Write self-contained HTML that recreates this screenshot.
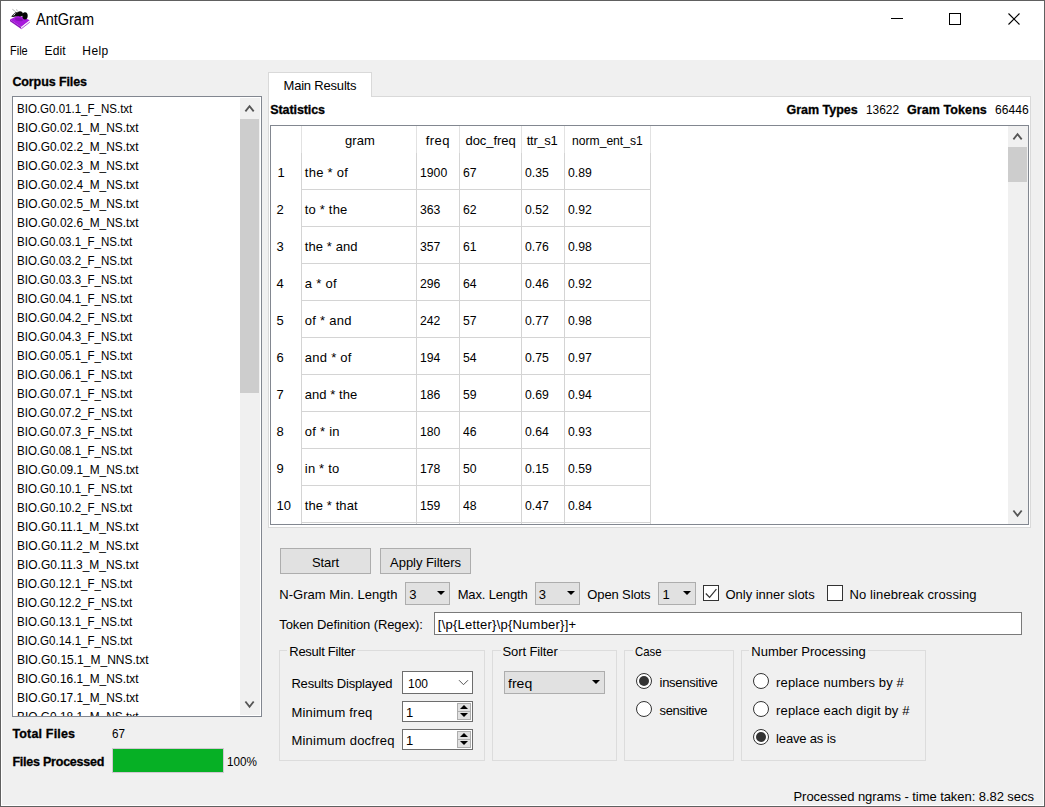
<!DOCTYPE html>
<html>
<head>
<meta charset="utf-8">
<title>AntGram</title>
<style>
html,body{margin:0;padding:0;}
body{width:1045px;height:807px;overflow:hidden;background:#f0f0f0;font-family:"Liberation Sans",sans-serif;color:#000;}
#win{position:relative;width:1045px;height:807px;overflow:hidden;background:#f0f0f0;}
#win div,#win span,#win svg{position:absolute;box-sizing:border-box;}
.t{white-space:pre;line-height:1;}
</style>
</head>
<body>
<div id="win">
<div style="left:0px;top:0px;width:1045px;height:60px;background:#fff;"></div>
<span class="t" style="left:35.50px;top:12px;font-size:16px;transform:scaleX(0.9060);transform-origin:0 0;">AntGram</span>
<svg style="left:0px;top:0px" width="40" height="34" viewBox="0 0 40 34"><polygon points="10,19.6 18.5,15.2 29.8,20.3 21.2,27" fill="#a818dc"/><polygon points="10,19.6 21.2,27 21.2,28.9 10,21.2" fill="#8e12bd"/><polygon points="21.2,27 29.8,20.3 29.8,22.2 21.2,28.9" fill="#f4e8fa"/><path d="M21.2 28.9 L29.8 22.2" stroke="#a030d0" stroke-width="0.8"/><ellipse cx="19" cy="19.5" rx="4" ry="1.6" fill="#8a10b8" transform="rotate(12 19 19.5)"/><ellipse cx="25" cy="15.8" rx="2.7" ry="3.6" fill="#050505"/><ellipse cx="20" cy="13.8" rx="2.8" ry="2.6" fill="#050505"/><path d="M11.2 16.4 L15.5 12.2 L19 12.5 L18.5 16 L13 17 Z" fill="#0a0a0a"/><path d="M13.6 15.6 L15.4 13.4" stroke="#eee" stroke-width="0.9"/><path d="M15.6 11.6 L12.4 9.3 M17.4 11.4 L16.6 9.4" stroke="#777" stroke-width="0.6" fill="none"/><path d="M22 15 L24 14" stroke="#050505" stroke-width="2.5"/></svg>
<div style="left:891px;top:18px;width:12px;height:1px;background:#000;"></div>
<div style="left:949px;top:13px;width:12px;height:12px;border:1px solid #000;"></div>
<svg style="left:1008px;top:12px" width="14" height="14" viewBox="0 0 14 14"><path d="M0.5 1.5 L11.5 12.5 M11.5 1.5 L0.5 12.5" stroke="#000" stroke-width="1.1" fill="none"/></svg>
<span class="t" style="left:9.70px;top:45px;font-size:12px;transform:scaleX(0.9156);transform-origin:0 0;">File</span>
<span class="t" style="left:44.50px;top:45px;font-size:12px;letter-spacing:0.175px;">Edit</span>
<span class="t" style="left:82.30px;top:45px;font-size:12px;letter-spacing:0.439px;">Help</span>
<span class="t" style="left:12.40px;top:76px;font-size:12.5px;font-weight:bold;-webkit-text-stroke:0.3px #000;letter-spacing:-0.101px;">Corpus Files</span>
<div style="left:12px;top:96px;width:250px;height:621px;background:#fff;border:1px solid #828790;"></div>
<div style="left:13px;top:97px;width:227px;height:619px;overflow:hidden;"><span class="t" style="left:4.00px;top:5px;font-size:13px;transform:scaleX(0.8866);transform-origin:0 0;">BIO.G0.01.1_F_NS.txt</span><span class="t" style="left:4.00px;top:24px;font-size:13px;transform:scaleX(0.9139);transform-origin:0 0;">BIO.G0.02.1_M_NS.txt</span><span class="t" style="left:4.00px;top:43px;font-size:13px;transform:scaleX(0.9139);transform-origin:0 0;">BIO.G0.02.2_M_NS.txt</span><span class="t" style="left:4.00px;top:62px;font-size:13px;transform:scaleX(0.9139);transform-origin:0 0;">BIO.G0.02.3_M_NS.txt</span><span class="t" style="left:4.00px;top:81px;font-size:13px;transform:scaleX(0.9139);transform-origin:0 0;">BIO.G0.02.4_M_NS.txt</span><span class="t" style="left:4.00px;top:100px;font-size:13px;transform:scaleX(0.9139);transform-origin:0 0;">BIO.G0.02.5_M_NS.txt</span><span class="t" style="left:4.00px;top:119px;font-size:13px;transform:scaleX(0.9139);transform-origin:0 0;">BIO.G0.02.6_M_NS.txt</span><span class="t" style="left:4.00px;top:138px;font-size:13px;transform:scaleX(0.8866);transform-origin:0 0;">BIO.G0.03.1_F_NS.txt</span><span class="t" style="left:4.00px;top:157px;font-size:13px;transform:scaleX(0.8866);transform-origin:0 0;">BIO.G0.03.2_F_NS.txt</span><span class="t" style="left:4.00px;top:176px;font-size:13px;transform:scaleX(0.8866);transform-origin:0 0;">BIO.G0.03.3_F_NS.txt</span><span class="t" style="left:4.00px;top:195px;font-size:13px;transform:scaleX(0.8866);transform-origin:0 0;">BIO.G0.04.1_F_NS.txt</span><span class="t" style="left:4.00px;top:214px;font-size:13px;transform:scaleX(0.8866);transform-origin:0 0;">BIO.G0.04.2_F_NS.txt</span><span class="t" style="left:4.00px;top:233px;font-size:13px;transform:scaleX(0.8866);transform-origin:0 0;">BIO.G0.04.3_F_NS.txt</span><span class="t" style="left:4.00px;top:252px;font-size:13px;transform:scaleX(0.8866);transform-origin:0 0;">BIO.G0.05.1_F_NS.txt</span><span class="t" style="left:4.00px;top:271px;font-size:13px;transform:scaleX(0.8866);transform-origin:0 0;">BIO.G0.06.1_F_NS.txt</span><span class="t" style="left:4.00px;top:290px;font-size:13px;transform:scaleX(0.8866);transform-origin:0 0;">BIO.G0.07.1_F_NS.txt</span><span class="t" style="left:4.00px;top:309px;font-size:13px;transform:scaleX(0.8866);transform-origin:0 0;">BIO.G0.07.2_F_NS.txt</span><span class="t" style="left:4.00px;top:328px;font-size:13px;transform:scaleX(0.8866);transform-origin:0 0;">BIO.G0.07.3_F_NS.txt</span><span class="t" style="left:4.00px;top:347px;font-size:13px;transform:scaleX(0.8866);transform-origin:0 0;">BIO.G0.08.1_F_NS.txt</span><span class="t" style="left:4.00px;top:366px;font-size:13px;transform:scaleX(0.9139);transform-origin:0 0;">BIO.G0.09.1_M_NS.txt</span><span class="t" style="left:4.00px;top:385px;font-size:13px;transform:scaleX(0.8866);transform-origin:0 0;">BIO.G0.10.1_F_NS.txt</span><span class="t" style="left:4.00px;top:404px;font-size:13px;transform:scaleX(0.8866);transform-origin:0 0;">BIO.G0.10.2_F_NS.txt</span><span class="t" style="left:4.00px;top:423px;font-size:13px;transform:scaleX(0.9206);transform-origin:0 0;">BIO.G0.11.1_M_NS.txt</span><span class="t" style="left:4.00px;top:442px;font-size:13px;transform:scaleX(0.9206);transform-origin:0 0;">BIO.G0.11.2_M_NS.txt</span><span class="t" style="left:4.00px;top:461px;font-size:13px;transform:scaleX(0.9206);transform-origin:0 0;">BIO.G0.11.3_M_NS.txt</span><span class="t" style="left:4.00px;top:480px;font-size:13px;transform:scaleX(0.8866);transform-origin:0 0;">BIO.G0.12.1_F_NS.txt</span><span class="t" style="left:4.00px;top:499px;font-size:13px;transform:scaleX(0.8866);transform-origin:0 0;">BIO.G0.12.2_F_NS.txt</span><span class="t" style="left:4.00px;top:518px;font-size:13px;transform:scaleX(0.8866);transform-origin:0 0;">BIO.G0.13.1_F_NS.txt</span><span class="t" style="left:4.00px;top:537px;font-size:13px;transform:scaleX(0.8866);transform-origin:0 0;">BIO.G0.14.1_F_NS.txt</span><span class="t" style="left:4.00px;top:556px;font-size:13px;transform:scaleX(0.9239);transform-origin:0 0;">BIO.G0.15.1_M_NNS.txt</span><span class="t" style="left:4.00px;top:575px;font-size:13px;transform:scaleX(0.9139);transform-origin:0 0;">BIO.G0.16.1_M_NS.txt</span><span class="t" style="left:4.00px;top:594px;font-size:13px;transform:scaleX(0.9139);transform-origin:0 0;">BIO.G0.17.1_M_NS.txt</span><span class="t" style="left:4.00px;top:613px;font-size:13px;transform:scaleX(0.9139);transform-origin:0 0;">BIO.G0.18.1_M_NS.txt</span></div>
<div style="left:240px;top:98px;width:20px;height:617px;background:#f0f0f0;"></div>
<div style="left:240px;top:119px;width:19px;height:274px;background:#cdcdcd;"></div>
<svg style="left:244.00px;top:104.00px" width="11" height="9" viewBox="0 0 11 9"><path d="M1.4 7.4 L5.55 2.1 L9.7 7.4" stroke="#555" stroke-width="1.8" fill="none"/></svg>
<svg style="left:244.00px;top:700.00px" width="11" height="9" viewBox="0 0 11 9"><path d="M1.4 1.5 L5.55 6.8 L9.7 1.5" stroke="#555" stroke-width="1.8" fill="none"/></svg>
<span class="t" style="left:12.40px;top:728px;font-size:12.5px;font-weight:bold;-webkit-text-stroke:0.3px #000;letter-spacing:0.171px;">Total Files</span>
<span class="t" style="left:112.30px;top:727px;font-size:13px;transform:scaleX(0.8993);transform-origin:0 0;">67</span>
<span class="t" style="left:12.40px;top:756px;font-size:12.5px;font-weight:bold;-webkit-text-stroke:0.3px #000;letter-spacing:-0.228px;">Files Processed</span>
<div style="left:112px;top:748px;width:112px;height:25px;background:#06b025;border:1px solid #d2c8d2;"></div>
<span class="t" style="left:227.00px;top:755px;font-size:13px;transform:scaleX(0.9021);transform-origin:0 0;">100%</span>
<div style="left:268px;top:96px;width:763px;height:432px;background:#fff;border:1px solid #d9d9d9;"></div>
<div style="left:268px;top:72px;width:104px;height:25px;background:#fff;border:1px solid #d9d9d9;border-bottom:none;"></div>
<span class="t" style="left:283.50px;top:79px;font-size:13px;letter-spacing:-0.195px;">Main Results</span>
<span class="t" style="left:270.30px;top:104px;font-size:12.5px;font-weight:bold;-webkit-text-stroke:0.3px #000;letter-spacing:-0.097px;">Statistics</span>
<span class="t" style="left:786.50px;top:104px;font-size:12.5px;font-weight:bold;-webkit-text-stroke:0.3px #000;letter-spacing:-0.014px;">Gram Types</span>
<span class="t" style="left:866.10px;top:103px;font-size:13px;transform:scaleX(0.9156);transform-origin:0 0;">13622</span>
<span class="t" style="left:907.00px;top:104px;font-size:12.5px;font-weight:bold;-webkit-text-stroke:0.3px #000;letter-spacing:0.084px;">Gram Tokens</span>
<span class="t" style="left:994.50px;top:103px;font-size:13px;transform:scaleX(0.9294);transform-origin:0 0;">66446</span>
<div style="left:270px;top:125px;width:759px;height:400px;background:#fff;border:1px solid #828790;"></div>
<div style="left:301px;top:126px;width:1px;height:27px;background:#e2e2e2;"></div>
<div style="left:301px;top:153px;width:1px;height:371px;background:#d4d4d4;"></div>
<div style="left:416px;top:126px;width:1px;height:27px;background:#e2e2e2;"></div>
<div style="left:416px;top:153px;width:1px;height:371px;background:#d4d4d4;"></div>
<div style="left:459px;top:126px;width:1px;height:27px;background:#e2e2e2;"></div>
<div style="left:459px;top:153px;width:1px;height:371px;background:#d4d4d4;"></div>
<div style="left:521px;top:126px;width:1px;height:27px;background:#e2e2e2;"></div>
<div style="left:521px;top:153px;width:1px;height:371px;background:#d4d4d4;"></div>
<div style="left:564px;top:126px;width:1px;height:27px;background:#e2e2e2;"></div>
<div style="left:564px;top:153px;width:1px;height:371px;background:#d4d4d4;"></div>
<div style="left:650px;top:126px;width:1px;height:27px;background:#e2e2e2;"></div>
<div style="left:650px;top:153px;width:1px;height:371px;background:#d4d4d4;"></div>
<div style="left:302px;top:189px;width:349px;height:1px;background:#d4d4d4;"></div>
<div style="left:302px;top:226px;width:349px;height:1px;background:#d4d4d4;"></div>
<div style="left:302px;top:263px;width:349px;height:1px;background:#d4d4d4;"></div>
<div style="left:302px;top:300px;width:349px;height:1px;background:#d4d4d4;"></div>
<div style="left:302px;top:337px;width:349px;height:1px;background:#d4d4d4;"></div>
<div style="left:302px;top:374px;width:349px;height:1px;background:#d4d4d4;"></div>
<div style="left:302px;top:411px;width:349px;height:1px;background:#d4d4d4;"></div>
<div style="left:302px;top:448px;width:349px;height:1px;background:#d4d4d4;"></div>
<div style="left:302px;top:485px;width:349px;height:1px;background:#d4d4d4;"></div>
<div style="left:302px;top:522px;width:349px;height:1px;background:#d4d4d4;"></div>
<span class="t" style="left:344.95px;top:134px;font-size:13px;letter-spacing:0.095px;">gram</span>
<span class="t" style="left:425.75px;top:134px;font-size:13px;letter-spacing:0.434px;">freq</span>
<span class="t" style="left:465.55px;top:134px;font-size:13px;letter-spacing:-0.071px;">doc_freq</span>
<span class="t" style="left:526.80px;top:134px;font-size:13px;letter-spacing:-0.303px;">ttr_s1</span>
<span class="t" style="left:572.00px;top:134px;font-size:13px;transform:scaleX(0.9330);transform-origin:0 0;">norm_ent_s1</span>
<span class="t" style="left:277.60px;top:166px;font-size:13px;">1</span>
<span class="t" style="left:304.80px;top:166px;font-size:13px;letter-spacing:0.282px;">the * of</span>
<span class="t" style="left:420.40px;top:166px;font-size:13px;transform:scaleX(0.9404);transform-origin:0 0;">1900</span>
<span class="t" style="left:463.30px;top:166px;font-size:13px;transform:scaleX(0.9404);transform-origin:0 0;">67</span>
<span class="t" style="left:524.90px;top:166px;font-size:13px;transform:scaleX(0.9404);transform-origin:0 0;">0.35</span>
<span class="t" style="left:568.10px;top:166px;font-size:13px;transform:scaleX(0.9404);transform-origin:0 0;">0.89</span>
<span class="t" style="left:276.60px;top:203px;font-size:13px;">2</span>
<span class="t" style="left:304.80px;top:203px;font-size:13px;letter-spacing:0.186px;">to * the</span>
<span class="t" style="left:420.40px;top:203px;font-size:13px;transform:scaleX(0.9404);transform-origin:0 0;">363</span>
<span class="t" style="left:463.30px;top:203px;font-size:13px;transform:scaleX(0.9404);transform-origin:0 0;">62</span>
<span class="t" style="left:524.90px;top:203px;font-size:13px;transform:scaleX(0.9404);transform-origin:0 0;">0.52</span>
<span class="t" style="left:568.10px;top:203px;font-size:13px;transform:scaleX(0.9404);transform-origin:0 0;">0.92</span>
<span class="t" style="left:276.60px;top:240px;font-size:13px;">3</span>
<span class="t" style="left:304.80px;top:240px;font-size:13px;letter-spacing:0.095px;">the * and</span>
<span class="t" style="left:420.40px;top:240px;font-size:13px;transform:scaleX(0.9404);transform-origin:0 0;">357</span>
<span class="t" style="left:463.30px;top:240px;font-size:13px;transform:scaleX(0.9404);transform-origin:0 0;">61</span>
<span class="t" style="left:524.90px;top:240px;font-size:13px;transform:scaleX(0.9404);transform-origin:0 0;">0.76</span>
<span class="t" style="left:568.10px;top:240px;font-size:13px;transform:scaleX(0.9404);transform-origin:0 0;">0.98</span>
<span class="t" style="left:276.60px;top:277px;font-size:13px;">4</span>
<span class="t" style="left:304.80px;top:277px;font-size:13px;letter-spacing:0.284px;">a * of</span>
<span class="t" style="left:420.40px;top:277px;font-size:13px;transform:scaleX(0.9404);transform-origin:0 0;">296</span>
<span class="t" style="left:463.30px;top:277px;font-size:13px;transform:scaleX(0.9404);transform-origin:0 0;">64</span>
<span class="t" style="left:524.90px;top:277px;font-size:13px;transform:scaleX(0.9404);transform-origin:0 0;">0.46</span>
<span class="t" style="left:568.10px;top:277px;font-size:13px;transform:scaleX(0.9404);transform-origin:0 0;">0.92</span>
<span class="t" style="left:276.60px;top:314px;font-size:13px;">5</span>
<span class="t" style="left:304.80px;top:314px;font-size:13px;letter-spacing:0.270px;">of * and</span>
<span class="t" style="left:420.40px;top:314px;font-size:13px;transform:scaleX(0.9404);transform-origin:0 0;">242</span>
<span class="t" style="left:463.30px;top:314px;font-size:13px;transform:scaleX(0.9404);transform-origin:0 0;">57</span>
<span class="t" style="left:524.90px;top:314px;font-size:13px;transform:scaleX(0.9404);transform-origin:0 0;">0.77</span>
<span class="t" style="left:568.10px;top:314px;font-size:13px;transform:scaleX(0.9404);transform-origin:0 0;">0.98</span>
<span class="t" style="left:276.60px;top:351px;font-size:13px;">6</span>
<span class="t" style="left:304.80px;top:351px;font-size:13px;letter-spacing:0.266px;">and * of</span>
<span class="t" style="left:420.40px;top:351px;font-size:13px;transform:scaleX(0.9404);transform-origin:0 0;">194</span>
<span class="t" style="left:463.30px;top:351px;font-size:13px;transform:scaleX(0.9404);transform-origin:0 0;">54</span>
<span class="t" style="left:524.90px;top:351px;font-size:13px;transform:scaleX(0.9404);transform-origin:0 0;">0.75</span>
<span class="t" style="left:568.10px;top:351px;font-size:13px;transform:scaleX(0.9404);transform-origin:0 0;">0.97</span>
<span class="t" style="left:276.60px;top:388px;font-size:13px;">7</span>
<span class="t" style="left:304.80px;top:388px;font-size:13px;letter-spacing:0.045px;">and * the</span>
<span class="t" style="left:420.40px;top:388px;font-size:13px;transform:scaleX(0.9404);transform-origin:0 0;">186</span>
<span class="t" style="left:463.30px;top:388px;font-size:13px;transform:scaleX(0.9404);transform-origin:0 0;">59</span>
<span class="t" style="left:524.90px;top:388px;font-size:13px;transform:scaleX(0.9404);transform-origin:0 0;">0.69</span>
<span class="t" style="left:568.10px;top:388px;font-size:13px;transform:scaleX(0.9404);transform-origin:0 0;">0.94</span>
<span class="t" style="left:276.60px;top:425px;font-size:13px;">8</span>
<span class="t" style="left:304.80px;top:425px;font-size:13px;letter-spacing:0.260px;">of * in</span>
<span class="t" style="left:420.40px;top:425px;font-size:13px;transform:scaleX(0.9404);transform-origin:0 0;">180</span>
<span class="t" style="left:463.30px;top:425px;font-size:13px;transform:scaleX(0.9404);transform-origin:0 0;">46</span>
<span class="t" style="left:524.90px;top:425px;font-size:13px;transform:scaleX(0.9404);transform-origin:0 0;">0.64</span>
<span class="t" style="left:568.10px;top:425px;font-size:13px;transform:scaleX(0.9404);transform-origin:0 0;">0.93</span>
<span class="t" style="left:276.60px;top:462px;font-size:13px;">9</span>
<span class="t" style="left:304.80px;top:462px;font-size:13px;letter-spacing:0.193px;">in * to</span>
<span class="t" style="left:420.40px;top:462px;font-size:13px;transform:scaleX(0.9404);transform-origin:0 0;">178</span>
<span class="t" style="left:463.30px;top:462px;font-size:13px;transform:scaleX(0.9404);transform-origin:0 0;">50</span>
<span class="t" style="left:524.90px;top:462px;font-size:13px;transform:scaleX(0.9404);transform-origin:0 0;">0.15</span>
<span class="t" style="left:568.10px;top:462px;font-size:13px;transform:scaleX(0.9404);transform-origin:0 0;">0.59</span>
<span class="t" style="left:276.60px;top:499px;font-size:13px;">10</span>
<span class="t" style="left:304.80px;top:499px;font-size:13px;letter-spacing:0.085px;">the * that</span>
<span class="t" style="left:420.40px;top:499px;font-size:13px;transform:scaleX(0.9404);transform-origin:0 0;">159</span>
<span class="t" style="left:463.30px;top:499px;font-size:13px;transform:scaleX(0.9404);transform-origin:0 0;">48</span>
<span class="t" style="left:524.90px;top:499px;font-size:13px;transform:scaleX(0.9404);transform-origin:0 0;">0.47</span>
<span class="t" style="left:568.10px;top:499px;font-size:13px;transform:scaleX(0.9404);transform-origin:0 0;">0.84</span>
<div style="left:1008px;top:126px;width:20px;height:398px;background:#f0f0f0;"></div>
<div style="left:1008px;top:147px;width:19px;height:35px;background:#cdcdcd;"></div>
<svg style="left:1012.05px;top:132.10px" width="11" height="9" viewBox="0 0 11 9"><path d="M1.4 7.4 L5.55 2.1 L9.7 7.4" stroke="#555" stroke-width="1.8" fill="none"/></svg>
<svg style="left:1012.05px;top:508.90px" width="11" height="9" viewBox="0 0 11 9"><path d="M1.4 1.5 L5.55 6.8 L9.7 1.5" stroke="#555" stroke-width="1.8" fill="none"/></svg>
<div style="left:280px;top:548px;width:91px;height:26px;background:#e1e1e1;border:1px solid #adadad;"></div>
<span class="t" style="left:312.00px;top:556px;font-size:13px;letter-spacing:-0.114px;">Start</span>
<div style="left:380px;top:548px;width:91px;height:26px;background:#e1e1e1;border:1px solid #adadad;"></div>
<span class="t" style="left:390.10px;top:556px;font-size:13px;letter-spacing:-0.044px;">Apply Filters</span>
<span class="t" style="left:279.30px;top:588px;font-size:13px;letter-spacing:0.025px;">N-Gram Min. Length</span>
<div style="left:405px;top:582px;width:45px;height:23px;background:#e1e1e1;border:1px solid #adadad;"></div>
<span class="t" style="left:409.20px;top:588px;font-size:13px;">3</span>
<svg style="left:437px;top:591px" width="8" height="4" viewBox="0 0 8 4"><polygon points="0,0 8,0 4.0,4" fill="#000"/></svg>
<span class="t" style="left:457.70px;top:588px;font-size:13px;letter-spacing:-0.154px;">Max. Length</span>
<div style="left:535px;top:582px;width:45px;height:23px;background:#e1e1e1;border:1px solid #adadad;"></div>
<span class="t" style="left:538.80px;top:588px;font-size:13px;">3</span>
<svg style="left:567px;top:591px" width="8" height="4" viewBox="0 0 8 4"><polygon points="0,0 8,0 4.0,4" fill="#000"/></svg>
<span class="t" style="left:587.30px;top:588px;font-size:13px;letter-spacing:-0.123px;">Open Slots</span>
<div style="left:658px;top:582px;width:38px;height:23px;background:#e1e1e1;border:1px solid #adadad;"></div>
<span class="t" style="left:662.50px;top:588px;font-size:13px;">1</span>
<svg style="left:683px;top:591px" width="8" height="4" viewBox="0 0 8 4"><polygon points="0,0 8,0 4.0,4" fill="#000"/></svg>
<div style="left:703px;top:585px;width:16px;height:16px;background:#fff;border:1px solid #333;"></div>
<svg style="left:703px;top:585px" width="16" height="16" viewBox="0 0 16 16"><path d="M2.8 8.5 L6.6 12.3 L13.4 4.2" stroke="#333" stroke-width="1.2" fill="none"/></svg>
<span class="t" style="left:725.50px;top:588px;font-size:13px;letter-spacing:-0.026px;">Only inner slots</span>
<div style="left:827px;top:585px;width:16px;height:16px;background:#fff;border:1px solid #333;"></div>
<span class="t" style="left:849.60px;top:588px;font-size:13px;letter-spacing:0.100px;">No linebreak crossing</span>
<span class="t" style="left:279.30px;top:618px;font-size:13px;letter-spacing:-0.099px;">Token Definition (Regex):</span>
<div style="left:434px;top:612px;width:588px;height:23px;background:#fff;border:1px solid #7a7a7a;"></div>
<span class="t" style="left:437.80px;top:618px;font-size:13px;letter-spacing:0.225px;">[\p{Letter}\p{Number}]+</span>
<div style="left:279px;top:650px;width:206px;height:111px;border:1px solid #dcdcdc;"></div>
<div style="left:287.3px;top:647px;width:70.1px;height:8px;background:#f0f0f0;"></div>
<span class="t" style="left:289.30px;top:645px;font-size:13px;letter-spacing:-0.271px;">Result Filter</span>
<div style="left:492px;top:650px;width:125px;height:111px;border:1px solid #dcdcdc;"></div>
<div style="left:500.5px;top:647px;width:59.3px;height:8px;background:#f0f0f0;"></div>
<span class="t" style="left:502.50px;top:645px;font-size:13px;letter-spacing:-0.104px;">Sort Filter</span>
<div style="left:624px;top:650px;width:110px;height:111px;border:1px solid #dcdcdc;"></div>
<div style="left:632.7px;top:647px;width:30.6px;height:8px;background:#f0f0f0;"></div>
<span class="t" style="left:634.70px;top:645px;font-size:13px;transform:scaleX(0.8767);transform-origin:0 0;">Case</span>
<div style="left:741px;top:650px;width:185px;height:111px;border:1px solid #dcdcdc;"></div>
<div style="left:749.3px;top:647px;width:118.4px;height:8px;background:#f0f0f0;"></div>
<span class="t" style="left:751.30px;top:645px;font-size:13px;letter-spacing:0.015px;">Number Processing</span>
<span class="t" style="left:291.40px;top:677px;font-size:13px;letter-spacing:-0.190px;">Results Displayed</span>
<span class="t" style="left:291.40px;top:706px;font-size:13px;letter-spacing:0.196px;">Minimum freq</span>
<span class="t" style="left:291.40px;top:734px;font-size:13px;letter-spacing:0.243px;">Minimum docfreq</span>
<div style="left:402px;top:671px;width:71px;height:23px;background:#fff;border:1px solid #6d6d6d;"></div>
<span class="t" style="left:407.90px;top:677px;font-size:13px;transform:scaleX(0.9223);transform-origin:0 0;">100</span>
<svg style="left:458px;top:679px" width="11" height="8" viewBox="0 0 11 8"><path d="M1 1.2 L5.5 5.7 L10 1.2" stroke="#555" stroke-width="1" fill="none"/></svg>
<div style="left:402px;top:701px;width:71px;height:21px;background:#fff;border:1px solid #6d6d6d;"></div>
<div style="left:457px;top:703px;width:14px;height:9px;background:#e1e1e1;border:1px solid #adadad;"></div>
<div style="left:457px;top:711px;width:14px;height:9px;background:#e1e1e1;border:1px solid #adadad;"></div>
<svg style="left:460px;top:705px" width="8" height="4" viewBox="0 0 8 4"><polygon points="0,4 4.0,0 8,4" fill="#000"/></svg>
<svg style="left:460px;top:713px" width="8" height="4" viewBox="0 0 8 4"><polygon points="0,0 8,0 4.0,4" fill="#000"/></svg>
<span class="t" style="left:406.00px;top:706px;font-size:13px;">1</span>
<div style="left:402px;top:729px;width:71px;height:21px;background:#fff;border:1px solid #6d6d6d;"></div>
<div style="left:457px;top:731px;width:14px;height:9px;background:#e1e1e1;border:1px solid #adadad;"></div>
<div style="left:457px;top:739px;width:14px;height:9px;background:#e1e1e1;border:1px solid #adadad;"></div>
<svg style="left:460px;top:733px" width="8" height="4" viewBox="0 0 8 4"><polygon points="0,4 4.0,0 8,4" fill="#000"/></svg>
<svg style="left:460px;top:741px" width="8" height="4" viewBox="0 0 8 4"><polygon points="0,0 8,0 4.0,4" fill="#000"/></svg>
<span class="t" style="left:406.00px;top:734px;font-size:13px;">1</span>
<div style="left:504px;top:671px;width:101px;height:23px;background:#e1e1e1;border:1px solid #adadad;"></div>
<span class="t" style="left:507.70px;top:677px;font-size:13px;transform:scaleX(1.0804);transform-origin:0 0;">freq</span>
<svg style="left:592px;top:680px" width="8" height="4" viewBox="0 0 8 4"><polygon points="0,0 8,0 4.0,4" fill="#000"/></svg>
<div style="left:636px;top:673px;width:16px;height:16px;border:1px solid #333;border-radius:50%;background:#fff;"></div>
<div style="left:639px;top:676px;width:10px;height:10px;border-radius:50%;background:#333;"></div>
<div style="left:636px;top:701px;width:16px;height:16px;border:1px solid #333;border-radius:50%;background:#fff;"></div>
<span class="t" style="left:659.50px;top:676px;font-size:13px;letter-spacing:-0.250px;">insensitive</span>
<span class="t" style="left:659.50px;top:704px;font-size:13px;letter-spacing:-0.310px;">sensitive</span>
<div style="left:753px;top:673px;width:16px;height:16px;border:1px solid #333;border-radius:50%;background:#fff;"></div>
<div style="left:753px;top:701px;width:16px;height:16px;border:1px solid #333;border-radius:50%;background:#fff;"></div>
<div style="left:753px;top:729px;width:16px;height:16px;border:1px solid #333;border-radius:50%;background:#fff;"></div>
<div style="left:756px;top:732px;width:10px;height:10px;border-radius:50%;background:#333;"></div>
<span class="t" style="left:776.10px;top:676px;font-size:13px;letter-spacing:0.142px;">replace numbers by #</span>
<span class="t" style="left:776.10px;top:704px;font-size:13px;letter-spacing:0.151px;">replace each digit by #</span>
<span class="t" style="left:776.10px;top:732px;font-size:13px;letter-spacing:-0.163px;">leave as is</span>
<span class="t" style="left:793.50px;top:790px;font-size:13px;letter-spacing:-0.061px;">Processed ngrams - time taken: 8.82 secs</span>
<div style="left:1px;top:1px;width:1043px;height:805px;border:1px solid #fff;"></div>
<div style="left:0px;top:0px;width:1045px;height:807px;border:1px solid #606060;"></div>
</div>
</body>
</html>
